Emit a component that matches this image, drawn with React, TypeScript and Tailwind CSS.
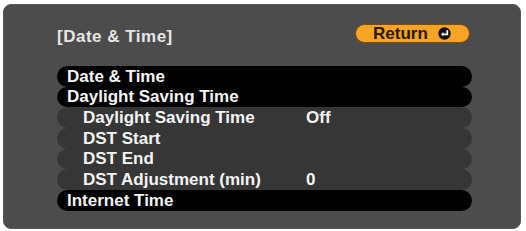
import React from "react";

const font = { fontFamily: '"Liberation Sans", Arial, sans-serif' };

function ReturnIcon() {
  return (
    <svg width="13" height="13" viewBox="0 0 13 13" className="block">
      <circle cx="6.5" cy="6.5" r="6.2" fill="#111" />
      <path d="M9.3 3.2 V7.3 H4.6" fill="none" stroke="#fff" strokeWidth="1.8" />
      <path d="M3 7.3 L5.4 5 V9.6 Z" fill="#fff" />
    </svg>
  );
}

function MainRow({ label }: { label: string }) {
  return (
    <div className="h-[20.7px] rounded-full bg-black flex items-center pl-[10px] text-[17px] leading-[20.7px] font-bold text-[#f4f4f4]">
      <span className="pt-[1px]">{label}</span>
    </div>
  );
}

function SubRow({ label, value }: { label: string; value?: string }) {
  return (
    <div className="h-[20.7px] rounded-full bg-[#363636] flex items-center text-[17px] leading-[20.7px] font-bold text-[#f4f4f4]">
      <span className="pl-[26px] w-[249px] pt-[1px]">{label}</span>
      <span className="pt-[1px]">{value}</span>
    </div>
  );
}

export default function App() {
  return (
    <div className="w-[526px] h-[231px] bg-white pt-[4px] pl-[3px]" style={font}>
      <div className="w-[518px] h-[225px] rounded-[8px] bg-[#4c4c4c] border border-[#575757] pt-[19px] pl-[53px] pr-[48px]">
        <div className="flex items-start justify-between">
          <div className="mt-[3px] text-[17px] leading-[20px] font-bold tracking-[0.5px] text-[#e6e6e6]">[Date &amp; Time]</div>
          <div className="w-[115px] h-[19px] rounded-full bg-[#f6a425] border border-[#7a4c08] flex items-center pl-[17px] mr-[2px]">
            <span className="text-[17px] leading-[17px] font-bold text-[#2a1800]">Return</span>
            <span className="ml-[10px]">
              <ReturnIcon />
            </span>
          </div>
        </div>
        <div className="mt-[19px] flex flex-col w-[415px]">
          <MainRow label="Date & Time" />
          <MainRow label="Daylight Saving Time" />
          <SubRow label="Daylight Saving Time" value="Off" />
          <SubRow label="DST Start" />
          <SubRow label="DST End" />
          <SubRow label="DST Adjustment (min)" value="0" />
          <MainRow label="Internet Time" />
        </div>
      </div>
    </div>
  );
}
